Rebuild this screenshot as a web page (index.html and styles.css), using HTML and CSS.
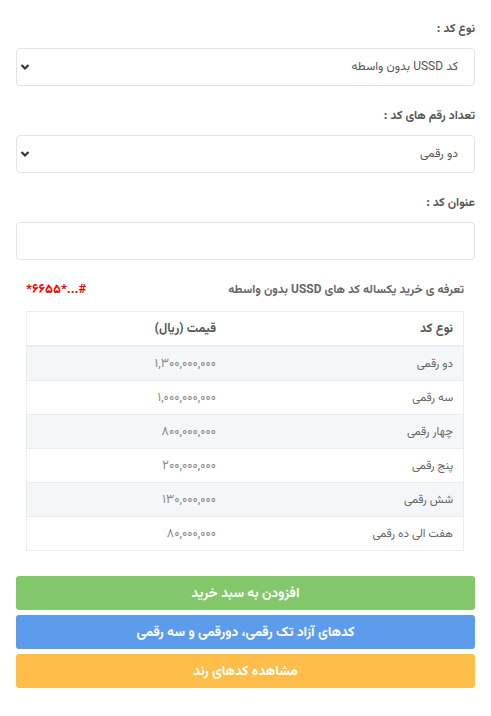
FILE: index.html
```html
<!DOCTYPE html>
<html lang="fa" dir="rtl">

<head>
    <meta charset="UTF-8">
    <meta name="viewport" content="width=device-width, initial-scale=1.0">
    <title>خرید کد USSD</title>
    <link rel="stylesheet" href="styles.css">
</head>

<body>
    <form class="order-form">
        <div class="form-group">
            <label for="codeType">نوع کد :</label>
            <div class="select-wrap">
                <select id="codeType">
                    <option>کد USSD بدون واسطه</option>
                </select>
                <svg class="chevron" width="10" height="8" viewBox="0 0 10 8"><path d="M1.5 2 L5 5.5 L8.5 2" fill="none" stroke="#333" stroke-width="2.2"/></svg>
            </div>
        </div>

        <div class="form-group">
            <label for="digits">تعداد رقم های کد :</label>
            <div class="select-wrap">
                <select id="digits">
                    <option>دو رقمی</option>
                </select>
                <svg class="chevron" width="10" height="8" viewBox="0 0 10 8"><path d="M1.5 2 L5 5.5 L8.5 2" fill="none" stroke="#333" stroke-width="2.2"/></svg>
            </div>
        </div>

        <div class="form-group">
            <label for="title">عنوان کد :</label>
            <input type="text" id="title">
        </div>

        <div class="tariff">
            <div class="tariff-head">
                <span class="tariff-title">تعرفه ی خرید یکساله کد های USSD بدون واسطه</span>
                <span class="tariff-code" dir="ltr">*۶۶۵۵*...#</span>
            </div>
            <table class="price-table">
                <thead>
                    <tr>
                        <th class="col-type">نوع کد</th>
                        <th>قیمت (ریال)</th>
                    </tr>
                </thead>
                <tbody>
                    <tr><td>دو رقمی</td><td class="price">۱,۳۰۰,۰۰۰,۰۰۰</td></tr>
                    <tr><td>سه رقمی</td><td class="price">۱,۰۰۰,۰۰۰,۰۰۰</td></tr>
                    <tr><td>چهار رقمی</td><td class="price">۸۰۰,۰۰۰,۰۰۰</td></tr>
                    <tr><td>پنج رقمی</td><td class="price">۲۰۰,۰۰۰,۰۰۰</td></tr>
                    <tr><td>شش رقمی</td><td class="price">۱۳۰,۰۰۰,۰۰۰</td></tr>
                    <tr><td>هفت الی ده رقمی</td><td class="price">۸۰,۰۰۰,۰۰۰</td></tr>
                </tbody>
            </table>
        </div>

        <div class="actions">
            <button type="button" class="btn btn-green">افزودن به سبد خرید</button>
            <button type="button" class="btn btn-blue">کدهای آزاد تک رقمی، دورقمی و سه رقمی</button>
            <button type="button" class="btn btn-orange">مشاهده کدهای رند</button>
        </div>
    </form>
</body>

</html>
```

FILE: styles.css
```css
body {
    font-family: Vazirmatn, "Noto Sans Arabic", "DejaVu Sans", sans-serif;
    background-color: #fff;
    margin: 0;
    padding: 19px 16px 20px;
    color: #555;
    font-size: 12px;
}

.form-group {
    margin-bottom: 20px;
}

label {
    display: block;
    font-weight: bold;
    font-size: 12px;
    line-height: 20px;
    margin-bottom: 9px;
    color: #555;
}

.select-wrap {
    position: relative;
}

select,
input[type="text"] {
    display: block;
    width: 100%;
    box-sizing: border-box;
    height: 38px;
    padding: 0 16px;
    border: 1px solid #e3e3e3;
    border-radius: 4px;
    background: #fff;
    font-family: inherit;
    font-size: 12px;
    color: #555;
    appearance: none;
    -webkit-appearance: none;
}

.select-wrap .chevron {
    position: absolute;
    left: 4px;
    top: 15px;
}

.tariff {
    padding: 0 11px 0 10px;
}

.tariff-head {
    display: flex;
    justify-content: space-between;
    align-items: center;
    height: 20px;
    margin-bottom: 11px;
}

.tariff-title {
    font-weight: bold;
    color: #666;
    font-size: 12px;
}

.tariff-code {
    font-weight: bold;
    color: #f00;
    font-size: 13px;
}

.price-table {
    width: 100%;
    border-collapse: collapse;
    border: 1px solid #ececec;
    font-size: 11.5px;
}

.price-table th {
    text-align: right;
    font-weight: bold;
    font-size: 12.5px;
    color: #555;
    height: 33px;
    padding: 0 10px;
    border-bottom: 2px solid #e9ecef;
}

.price-table .col-type {
    width: 217px;
}

.price-table td {
    height: 33px;
    padding: 0 10px;
    border-top: 1px solid #ececec;
    color: #666;
}

.price-table tbody tr:nth-child(odd) {
    background-color: #f4f7fa;
}

.price-table .price {
    color: #888;
    font-size: 12.5px;
}

.actions {
    margin-top: 25px;
    display: flex;
    flex-direction: column;
    gap: 5px;
}

.btn {
    display: block;
    width: 100%;
    height: 34px;
    border: none;
    border-radius: 3px;
    color: #fff;
    font-family: inherit;
    font-weight: bold;
    font-size: 13.5px;
    cursor: pointer;
}

.btn-green {
    background-color: #82c86a;
}

.btn-blue {
    background-color: #5d9cec;
}

.btn-orange {
    background-color: #ffbd4a;
}
```
